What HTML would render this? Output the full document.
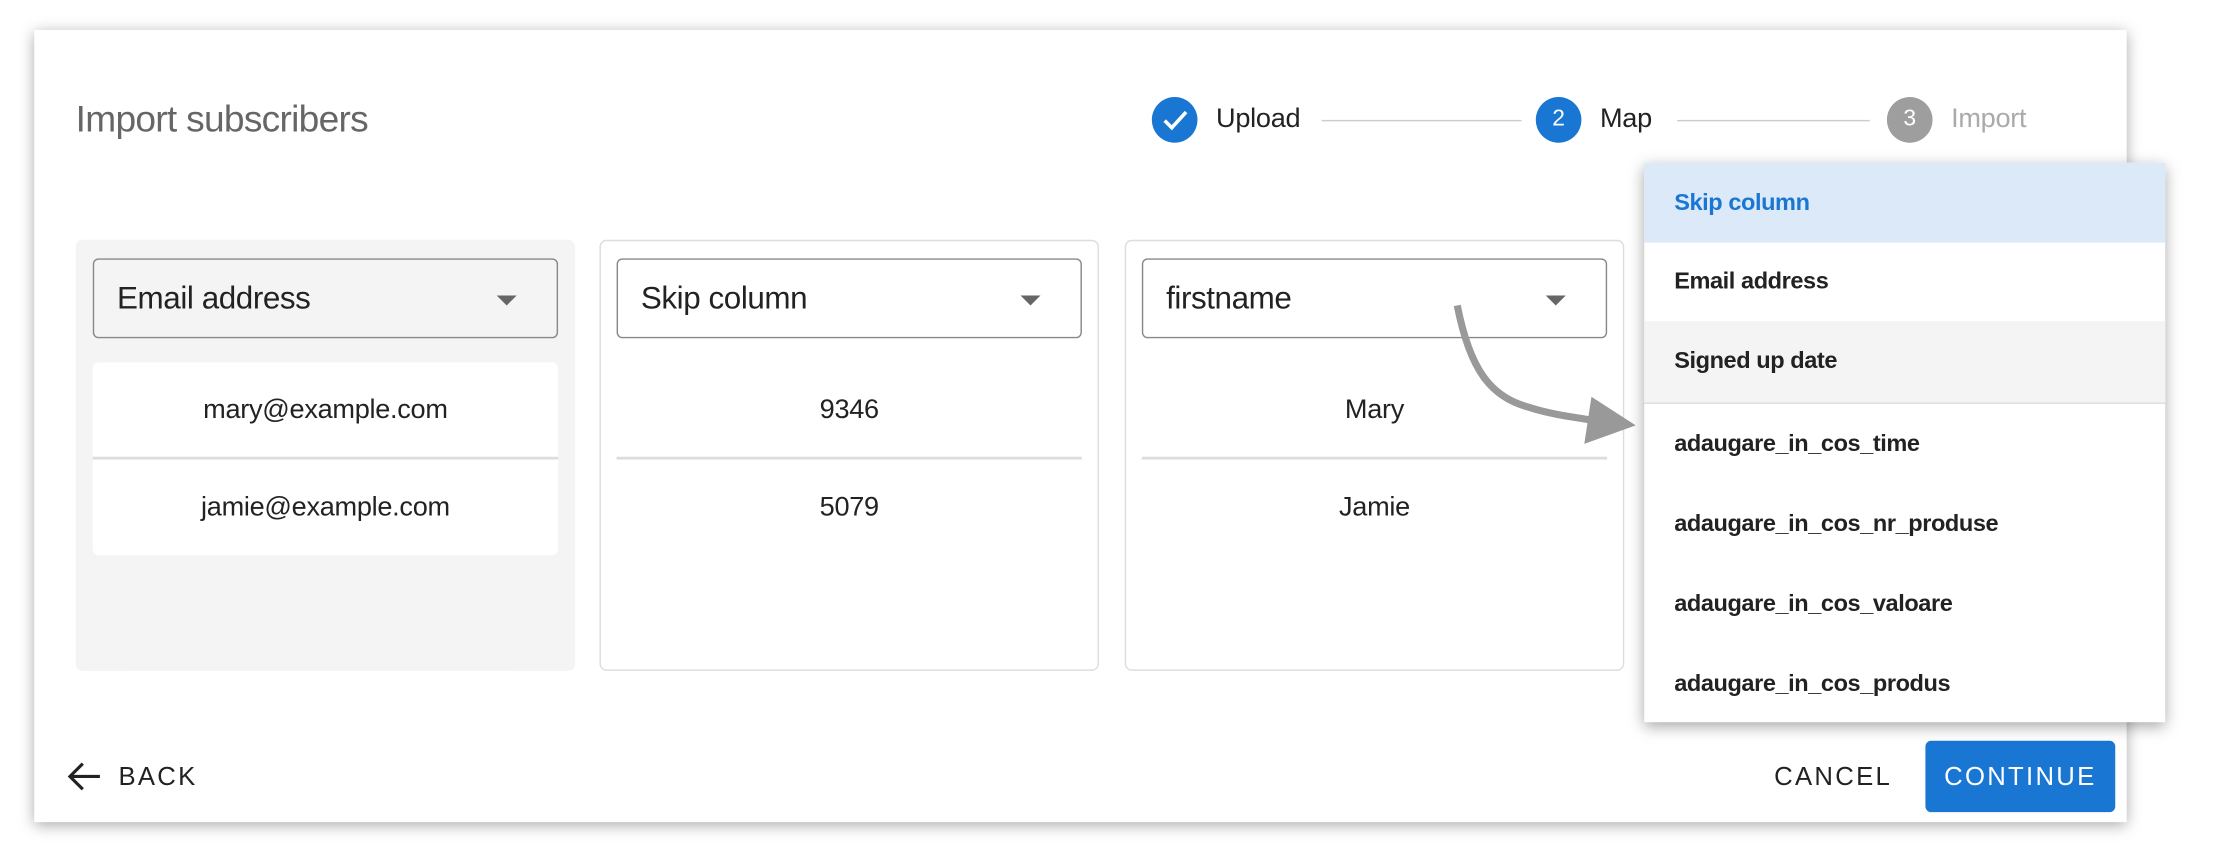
<!DOCTYPE html>
<html><head><meta charset="utf-8"><style>
*{box-sizing:border-box;margin:0;padding:0}
html,body{width:2238px;height:860px;overflow:hidden;background:#fff}
#w{position:absolute;left:0;top:0;width:1568px;height:603px;transform:scale(1.42730);transform-origin:0 0;font-family:"Liberation Sans",Roboto,sans-serif}
.a{position:absolute}
.card{left:24px;top:21px;width:1466px;height:555px;background:#fff;box-shadow:0 2px 10px rgba(0,0,0,.35)}
.title{left:53px;top:68px;font-size:26px;color:#666;letter-spacing:-.5px}
.circ{width:32px;height:32px;border-radius:50%;color:#fff;font-size:16px;text-align:center;line-height:32px}
.st{font-size:19px;top:73px;letter-spacing:-.2px}
.ln{height:1px;background:#ccc;top:84px}
.col{top:168px;width:350px;height:302px;border-radius:5px}
.sel{top:181px;width:326px;height:56px;border:1px solid #888;border-radius:4px;font-size:22px;padding-left:16px;line-height:54px;color:#222;letter-spacing:-.3px}
.tri{position:absolute;right:28px;top:25px;width:0;height:0;border-left:7px solid transparent;border-right:7px solid transparent;border-top:7px solid #666}
.cell{width:326px;font-size:19px;color:#222;text-align:center;letter-spacing:-.2px}
.dv{height:2px;background:#ddd;width:326px;top:320px}
.dd{left:1152px;top:114px;width:365px;height:392px;background:#fff;box-shadow:0 3px 10px rgba(0,0,0,.35)}
.it{position:absolute;left:0;width:365px;height:56px;padding-left:21px;line-height:56px;font-size:16.5px;color:#222;font-weight:bold;letter-spacing:-.3px}
.btn{font-size:18px;letter-spacing:1.6px;color:#222}
</style></head><body><div id="w">
<div class="a card"></div>
<div class="a title">Import subscribers</div>
<div class="a circ" style="left:807px;top:68px;background:#1976d2"><svg width="32" height="32"><path d="M9 16.5l5 5 10-11" stroke="#fff" stroke-width="2.5" fill="none"/></svg></div>
<div class="a st" style="left:852px;color:#222">Upload</div>
<div class="a ln" style="left:926px;width:140px"></div>
<div class="a circ" style="left:1076px;top:68px;background:#1976d2">2</div>
<div class="a st" style="left:1121px;color:#222">Map</div>
<div class="a ln" style="left:1175px;width:135px"></div>
<div class="a circ" style="left:1322px;top:68px;background:#9e9e9e">3</div>
<div class="a st" style="left:1367px;color:#aaa">Import</div>

<div class="a col" style="left:53px;background:#f4f4f4"></div>
<div class="a col" style="left:420px;border:1px solid #ddd"></div>
<div class="a col" style="left:788px;border:1px solid #ddd"></div>

<div class="a" style="left:65px;top:254px;width:326px;height:135px;background:#fff;border-radius:4px"></div>
<div class="a sel" style="left:65px;background:#f4f4f4">Email address<div class="tri"></div></div>
<div class="a sel" style="left:432px">Skip column<div class="tri"></div></div>
<div class="a sel" style="left:800px">firstname<div class="tri"></div></div>

<div class="a cell" style="left:65px;top:277px">mary@example.com</div>
<div class="a cell" style="left:65px;top:345px">jamie@example.com</div>
<div class="a cell" style="left:432px;top:277px">9346</div>
<div class="a cell" style="left:432px;top:345px">5079</div>
<div class="a cell" style="left:800px;top:277px">Mary</div>
<div class="a cell" style="left:800px;top:345px">Jamie</div>
<div class="a dv" style="left:65px"></div>
<div class="a dv" style="left:432px"></div>
<div class="a dv" style="left:800px"></div>

<svg class="a" style="left:0;top:0" width="1568" height="603">
<path d="M1021 214 C1030 260 1045 278 1070 285 C1085 290 1100 292 1120 295" stroke="#999" stroke-width="5" fill="none"/>
<path d="M1146 298 L1115 278 L1110 311 Z" fill="#999"/>
<path d="M70 544 H49 M58 535 L49 544 L58 553" stroke="#222" stroke-width="2.2" fill="none"/>
</svg>

<div class="a btn" style="left:83px;top:534px">BACK</div>
<div class="a btn" style="left:1243px;top:534px">CANCEL</div>
<div class="a" style="left:1349px;top:519px;width:133px;height:50px;background:#1976d2;border-radius:4px;color:#fff;font-size:18px;letter-spacing:1.6px;text-align:center;line-height:50px">CONTINUE</div>

<div class="a dd">
<div class="it" style="top:0;background:#dce9f8;color:#1976d2">Skip column</div>
<div class="it" style="top:55px">Email address</div>
<div class="it" style="top:111px;background:#f4f4f4;height:57px">Signed up date</div>
<div style="position:absolute;left:0;top:168px;width:365px;height:1px;background:#ddd"></div>
<div class="it" style="top:169px">adaugare_in_cos_time</div>
<div class="it" style="top:225px">adaugare_in_cos_nr_produse</div>
<div class="it" style="top:281px">adaugare_in_cos_valoare</div>
<div class="it" style="top:337px">adaugare_in_cos_produs</div>
</div>
</div></body></html>
